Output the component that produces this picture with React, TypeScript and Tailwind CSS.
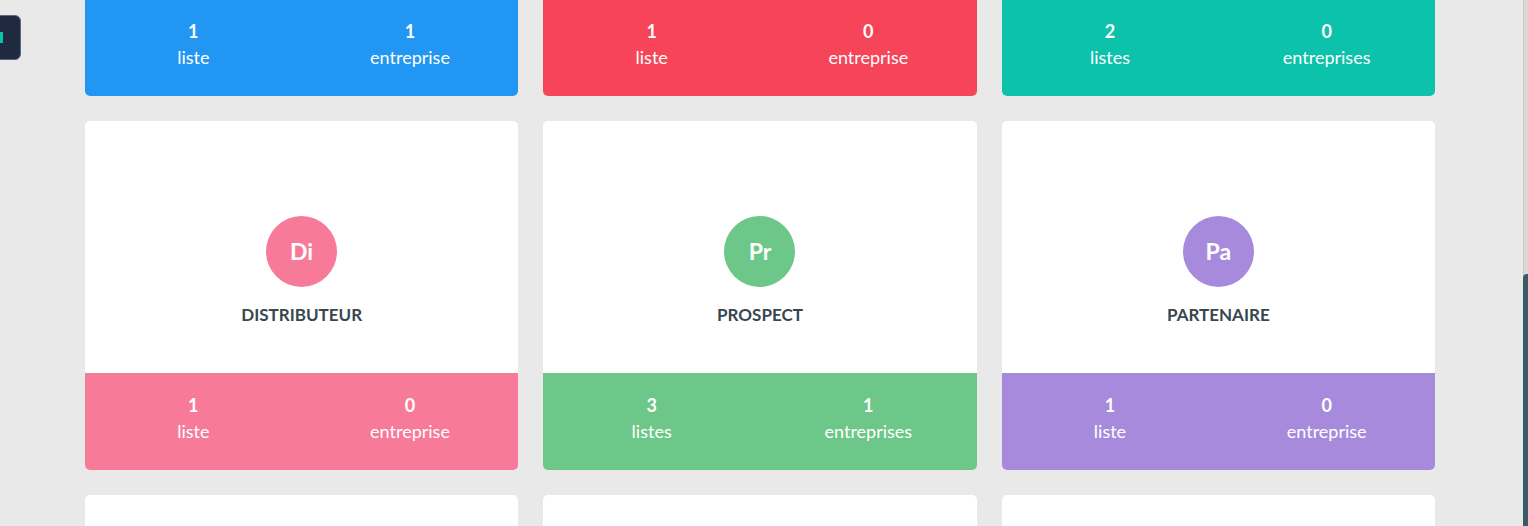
import React from 'react'

type Group = {
  code: string
  name: string
  color: string
  lists: number
  listLabel: string
  companies: number
  companyLabel: string
}

const groups: Group[] = [
  { code: 'Cl', name: 'Client', color: 'bg-[#2196f3]', lists: 1, listLabel: 'liste', companies: 1, companyLabel: 'entreprise' },
  { code: 'Fo', name: 'Fournisseur', color: 'bg-[#f64458]', lists: 1, listLabel: 'liste', companies: 0, companyLabel: 'entreprise' },
  { code: 'Co', name: 'Concurrent', color: 'bg-[#0cc2aa]', lists: 2, listLabel: 'listes', companies: 0, companyLabel: 'entreprises' },
  { code: 'Di', name: 'Distributeur', color: 'bg-[#f77a99]', lists: 1, listLabel: 'liste', companies: 0, companyLabel: 'entreprise' },
  { code: 'Pr', name: 'Prospect', color: 'bg-[#6cc788]', lists: 3, listLabel: 'listes', companies: 1, companyLabel: 'entreprises' },
  { code: 'Pa', name: 'Partenaire', color: 'bg-[#a88add]', lists: 1, listLabel: 'liste', companies: 0, companyLabel: 'entreprise' },
  { code: 'Re', name: 'Revendeur', color: 'bg-[#fcc100]', lists: 0, listLabel: 'liste', companies: 0, companyLabel: 'entreprise' },
  { code: 'In', name: 'Investisseur', color: 'bg-[#2196f3]', lists: 0, listLabel: 'liste', companies: 0, companyLabel: 'entreprise' },
  { code: 'Au', name: 'Autre', color: 'bg-[#f64458]', lists: 0, listLabel: 'liste', companies: 0, companyLabel: 'entreprise' },
]

function GroupCard({ g }: { g: Group }) {
  return (
    <div className="rounded-[5px] overflow-hidden bg-white">
      <div className="h-[252px] pt-[95px] flex flex-col items-center">
        <div className={`w-[71px] h-[71px] rounded-full ${g.color} flex items-center justify-center text-white text-[23px] font-bold`}>
          {g.code}
        </div>
        <div className="mt-[18px] text-[17px] leading-[20px] font-bold uppercase text-[#37474f]">
          {g.name}
        </div>
      </div>
      <div className={`${g.color} h-[97px] grid grid-cols-2 pt-[20px] text-white text-center`}>
        <div>
          <div className="text-[18px] leading-[24px] font-bold">{g.lists}</div>
          <div className="text-[18px] leading-[28px]">{g.listLabel}</div>
        </div>
        <div>
          <div className="text-[18px] leading-[24px] font-bold">{g.companies}</div>
          <div className="text-[18px] leading-[28px]">{g.companyLabel}</div>
        </div>
      </div>
    </div>
  )
}

export default function App() {
  return (
    <div
      className="relative h-[526px] w-[1528px] overflow-hidden bg-[#e9e9e9]"
      style={{ fontFamily: 'Lato, "Open Sans", sans-serif' }}
    >
      {/* page content, scrolled down */}
      <div className="-mt-[253px] ml-[85px] w-[1350px] grid grid-cols-3 gap-[25px]">
        {groups.map(g => (
          <GroupCard key={g.code} g={g} />
        ))}
      </div>

      {/* theme switcher tab */}
      <div className="absolute left-[-24px] top-[15px] w-[45px] h-[45px] rounded-[6px] bg-[#1f2a40] border border-[#5b6a7b] flex items-center">
        <div className="ml-[23px] w-[3px] h-[11px] bg-[#0cc2aa]" />
      </div>

      {/* scrollbar */}
      <div className="absolute right-0 top-0 h-full w-[5px] bg-[#d9d9d9] border-l border-[#cacaca]">
        <div className="absolute left-[-1px] right-0 top-[274px] bottom-0 rounded-tl-[4px] bg-[#3b5a66]" />
      </div>
    </div>
  )
}
